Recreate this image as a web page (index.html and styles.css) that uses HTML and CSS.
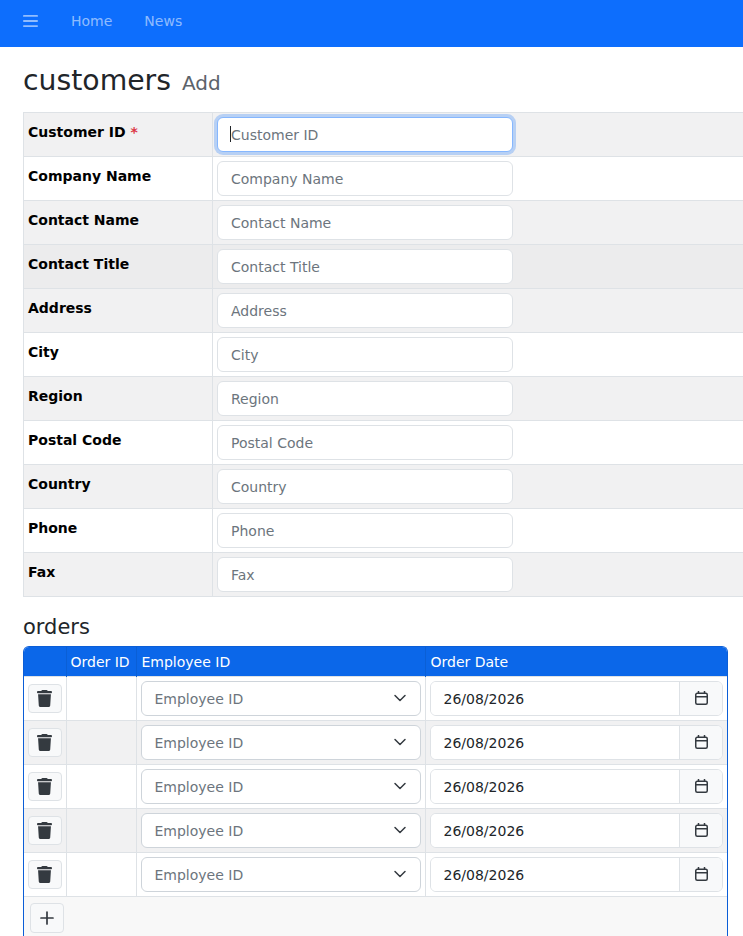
FILE: index.html
```html
<!DOCTYPE html>
<html lang="en">
<head>
<meta charset="utf-8">
<meta name="viewport" content="width=device-width,initial-scale=1">
<title>customers Add</title>
<link rel="stylesheet" href="styles.css">
</head>
<body>

<!-- NAV BAR -->
<nav class="topbar">
  <svg class="burger" width="15" height="12" viewBox="0 0 15 12" fill="currentColor"><rect y="0" width="15" height="1.800" rx=".9"/><rect y="5.100" width="15" height="1.800" rx=".9"/><rect y="10.200" width="15" height="1.800" rx=".9"/></svg>
  <a href="#">Home</a>
  <a href="#">News</a>
</nav>

<main>
  <h1 class="page-title">customers <small>Add</small></h1>

  <!-- MASTER FORM -->
  <table class="form-table">
    <tr><th>Customer ID <span class="req">*</span></th><td><div class="field-wrap"><input class="field" placeholder="Customer ID" autofocus><i class="caret-mark"></i></div></td></tr>
    <tr><th>Company Name</th><td><input class="field" placeholder="Company Name"></td></tr>
    <tr><th>Contact Name</th><td><input class="field" placeholder="Contact Name"></td></tr>
    <tr class="is-hover"><th>Contact Title</th><td><input class="field" placeholder="Contact Title"></td></tr>
    <tr><th>Address</th><td><input class="field" placeholder="Address"></td></tr>
    <tr><th>City</th><td><input class="field" placeholder="City"></td></tr>
    <tr><th>Region</th><td><input class="field" placeholder="Region"></td></tr>
    <tr><th>Postal Code</th><td><input class="field" placeholder="Postal Code"></td></tr>
    <tr><th>Country</th><td><input class="field" placeholder="Country"></td></tr>
    <tr><th>Phone</th><td><input class="field" placeholder="Phone"></td></tr>
    <tr><th>Fax</th><td><input class="field" placeholder="Fax"></td></tr>
  </table>

  <h2 class="detail-title">orders</h2>

  <!-- DETAIL GRID -->
  <div class="grid-wrap">
    <table class="grid">
      <thead>
        <tr><th class="col-del"></th><th class="col-id">Order ID</th><th class="col-emp">Employee ID</th><th>Order Date</th></tr>
      </thead>
      <tbody id="rows"></tbody>
    </table>
    <div class="grid-foot">
      <button class="btn btn-add" type="button"><svg width="14" height="14" viewBox="0 0 14 14" fill="none" stroke="currentColor" stroke-width="1.700" stroke-linecap="round"><path d="M7 1v12M1 7h12"/></svg></button>
    </div>
  </div>
</main>

<template id="row-tpl">
  <tr>
    <td class="cell-del"><button class="btn btn-del" type="button"><svg width="15" height="17" viewBox="0 0 448 512" preserveAspectRatio="none" fill="currentColor"><path d="M135.200 17.700L128 32H32C14.300 32 0 46.300 0 64S14.300 96 32 96H416c17.700 0 32-14.300 32-32s-14.300-32-32-32H320l-7.200-14.300C307.400 6.800 296.300 0 284.200 0H163.800c-12.100 0-23.200 6.800-28.600 17.700zM416 128H32L53.200 467c1.600 25.300 22.600 45 47.900 45H346.900c25.300 0 46.300-19.700 47.900-45L416 128z"/></svg></button></td>
    <td></td>
    <td>
      <div class="select-box">
        <span class="select-text">Employee ID</span>
        <svg width="16" height="16" viewBox="0 0 16 16" fill="none" stroke="#343a40" stroke-width="1.500" stroke-linecap="round" stroke-linejoin="round"><path d="m3 5.500 5 5 5-5"/></svg>
      </div>
    </td>
    <td>
      <div class="date-group">
        <input class="date-input" value="26/08/2026">
        <span class="date-btn"><svg width="13" height="14" viewBox="0 0 13 14" fill="none" stroke="#343a40" stroke-width="1.500"><rect x=".75" y="2.250" width="11.500" height="11" rx="1.500"/><path d="M.75 5.750h11.500M3.500 0v3M9.500 0v3"/></svg></span>
      </div>
    </td>
  </tr>
</template>

<script>
/* five blank order rows */
const tpl=document.getElementById("row-tpl");
const rows=document.getElementById("rows");
for(let i=0;i<5;i++)rows.appendChild(tpl.content.cloneNode(true));
</script>
</body>
</html>
```

FILE: styles.css
```css
*{box-sizing:border-box}
html,body{overflow:hidden}
body{margin:0;height:936px;font-family:"DejaVu Sans",Verdana,sans-serif;font-size:14px;color:#212529;background:#fff}

/* ---------- TOP NAV ---------- */
.topbar{height:47px;background:#0d6efd;display:flex;align-items:center;padding:0 0 5px 23px;color:rgba(255,255,255,.55)}
.burger{margin-right:33px}
.topbar a{color:rgba(255,255,255,.55);text-decoration:none;margin-right:32px}

/* ---------- HEADINGS ---------- */
main{padding:0 0 0 23px}
.page-title{margin:17px 0 12px;font-size:28.3px;font-weight:400;line-height:33px}
.page-title small{font-size:20px;color:#5c636a;margin-left:2px}
.detail-title{margin:16px 0 4px;font-size:21px;font-weight:400;line-height:29px}

/* ---------- MASTER FORM ---------- */
.form-table{border-collapse:collapse;width:720px;table-layout:fixed}
.form-table th,.form-table td{border:1px solid #dee2e6;height:44px;padding:4px;vertical-align:top}
.form-table td{border-right:0}
.form-table th{width:189px;text-align:left;font-weight:700;color:#000;line-height:21px;padding-top:9px}
.form-table tr:nth-child(odd){background:#f1f1f2}
.form-table tr.is-hover{background:#ececed}
.req{color:#dc3545}
.field{display:block;width:296px;height:35px;padding:0 13px;border:1px solid #dee2e6;border-radius:6px;background:#fff;font:inherit;color:#212529;outline:none}
.field::placeholder,.select-text{color:#6c757d}
.field:focus{border-color:#86b7fe;box-shadow:0 0 0 3px rgba(13,110,253,.25)}
.field-wrap{position:relative}
.caret-mark{position:absolute;left:13px;top:9px;width:1px;height:16px;background:#212529}

/* ---------- DETAIL GRID ---------- */
.grid-wrap{width:705px;border:1px solid #0b5ed7;border-bottom:0;border-radius:6px 6px 0 0;overflow:hidden}
.grid{border-collapse:collapse;width:100%;table-layout:fixed}
.grid th{height:29px;background:#0b67e9;color:#fff;font-weight:400;text-align:left;padding:1px 5px 0;border-left:1px solid #0a5fd6;white-space:nowrap}
.grid th:first-child{border-left:0}
.grid th.col-id{padding-left:4px}
.col-del{width:42px}.col-id{width:70px}.col-emp{width:289px}
.grid td{height:44px;padding:4px 4px 0;border:1px solid #dee2e6;vertical-align:top}
.grid td:first-child{border-left:0}
.grid td:last-child{border-right:0}
.grid tbody tr:nth-child(even){background:#f1f1f2}
.cell-del.cell-del{padding:7px 4px 0}

.btn{display:flex;align-items:center;justify-content:center;padding:0;background:#f8f9fa;border:1px solid #dee2e6;border-radius:4px;color:#343a40}
.btn-del{width:34px;height:29px;padding-right:1px}
.btn-add{width:34px;height:30px}
.grid-foot{height:40px;padding:6px;background:#f8f8f8}

.select-box{display:flex;align-items:center;justify-content:space-between;height:35px;padding:1px 12px 0 13px;background:#fff;border:1px solid #ced4da;border-radius:6px}
.select-box svg{margin-top:-1px}
.date-group{display:flex;height:35px;background:#fff;border:1px solid #dee2e6;border-radius:6px;overflow:hidden}
.date-input{flex:1;min-width:0;border:0;padding:1px 13px 0;font:inherit;color:#212529;outline:none;background:#fff}
.date-btn{width:43px;display:flex;align-items:center;justify-content:center;background:#f8f9fa;border-left:1px solid #dee2e6}
```
